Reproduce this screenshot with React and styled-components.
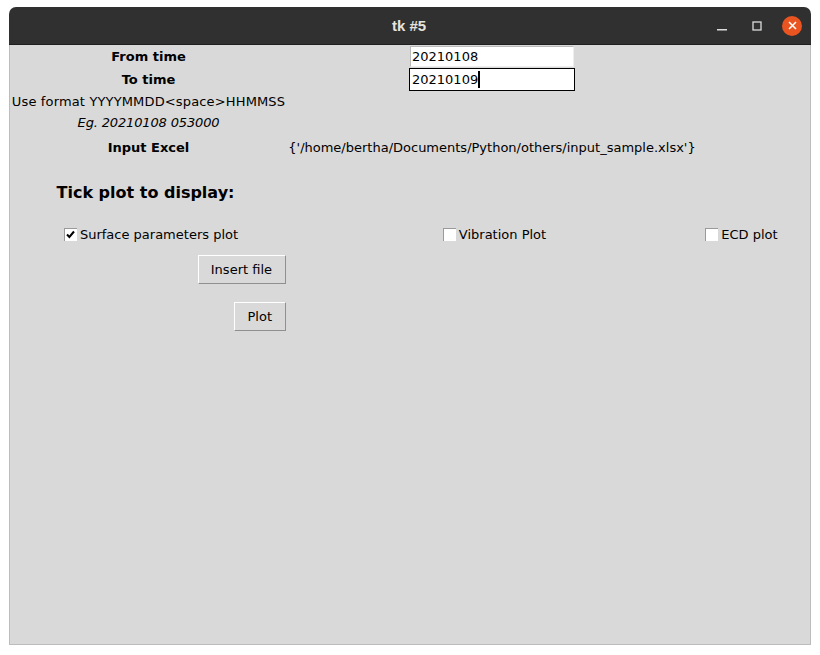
import React from "react";
import styled, { createGlobalStyle } from "styled-components";

const GlobalStyle = createGlobalStyle`
  html, body {
    margin: 0;
    padding: 0;
    background: #ffffff;
  }
`;

const Page = styled.div`
  width: 820px;
  height: 655px;
  padding: 7px 0 0 9px;
  box-sizing: border-box;
`;

const Window = styled.div`
  width: 802px;
  height: 638px;
  display: flex;
  flex-direction: column;
  border-radius: 7px 7px 0 0;
  overflow: hidden;
`;

const TitleBar = styled.div`
  height: 38px;
  flex-shrink: 0;
  background: #303030;
  border-bottom: 1px solid #1f1f1f;
  box-sizing: border-box;
  display: grid;
  grid-template-columns: 1fr auto 1fr;
  align-items: center;
`;

const Title = styled.div`
  grid-column: 2;
  color: #e6e3de;
  font-family: "Liberation Sans", "DejaVu Sans", sans-serif;
  font-weight: bold;
  font-size: 15px;
  padding-right: 2px;
`;

const Controls = styled.div`
  grid-column: 3;
  justify-self: end;
  display: flex;
  align-items: center;
  gap: 20px;
  padding-right: 9px;
`;

const CtrlIcon = styled.svg`
  display: block;
  margin-right: ${({ $extra }) => $extra || 0}px;
`;

const CloseBtn = styled.div`
  width: 20px;
  height: 20px;
  border-radius: 50%;
  background: #e95420;
  display: flex;
  align-items: center;
  justify-content: center;
`;

const Content = styled.div`
  flex: 1;
  background: #d9d9d9;
  border: 1px solid #bcbcbc;
  border-top: none;
  display: grid;
  grid-template-columns: 277px 410px 84px;
  grid-template-rows: 23px 23px 21px 20px 30px 60px 24px 47px 47px;
  align-content: start;
  align-items: center;
  color: #000;
  font-family: "DejaVu Sans", "Liberation Sans", sans-serif;
  font-size: 13px;
`;

const Cell = styled.div`
  grid-column: ${({ $col }) => $col};
  grid-row: ${({ $row }) => $row};
  justify-self: ${({ $justify }) => $justify || "center"};
  white-space: nowrap;
`;

const FieldLabel = styled(Cell)`
  font-weight: bold;
`;

const Hint = styled(Cell)`
  font-style: ${({ $italic }) => ($italic ? "italic" : "normal")};
  letter-spacing: ${({ $spacing }) => $spacing || 0}px;
`;

const Heading = styled(Cell)`
  font-weight: bold;
  font-size: 16px;
  padding-right: 6px;
`;

const Entry = styled(Cell)`
  width: ${({ $focus }) => ($focus ? "166px" : "164px")};
  height: ${({ $focus }) => ($focus ? "23px" : "21px")};
  box-sizing: border-box;
  background: #ffffff;
  border: 1px solid ${({ $focus }) => ($focus ? "#000000" : "#b9b9b9")};
  border-right-color: ${({ $focus }) => ($focus ? "#000000" : "#eeeeee")};
  border-bottom-color: ${({ $focus }) => ($focus ? "#000000" : "#eeeeee")};
  padding: 0 0 0 ${({ $focus }) => ($focus ? "2px" : "1px")};
  display: flex;
  align-items: center;
  line-height: 1;
`;

const Caret = styled.span`
  display: inline-block;
  width: 2px;
  height: 17px;
  background: #000;
`;

const Check = styled(Cell)`
  display: flex;
  align-items: center;
  gap: 3px;
  padding-left: 5px;
`;

const Box = styled.span`
  width: 13px;
  height: 13px;
  box-sizing: border-box;
  background: #ffffff;
  border-top: 1px solid #9a9a9a;
  border-left: 1px solid #9a9a9a;
  display: flex;
  align-items: center;
  justify-content: center;
`;

const Button = styled(Cell)`
  height: 29px;
  box-sizing: border-box;
  padding: 0 13px 0 12px;
  display: flex;
  align-items: center;
  background: #d9d9d9;
  border: 1px solid #ffffff;
  border-right-color: #8f8f8f;
  border-bottom-color: #8f8f8f;
  margin-right: 1px;
  color: #000;
  font-family: inherit;
  font-size: 13px;
`;

const CheckItem = ({ col, checked, children }) => (
  <Check $col={col} $row={7}>
    <Box>
      {checked && (
        <svg width="9" height="9" viewBox="0 0 9 9">
          <path d="M1 4.5 L3.4 7 L8 1.5" stroke="#000" strokeWidth="2" fill="none" />
        </svg>
      )}
    </Box>
    <span>{children}</span>
  </Check>
);

const App = () => {
  return (
    <Page>
      <GlobalStyle />
      <Window>
        <TitleBar>
          <Title>tk #5</Title>
          <Controls>
            <CtrlIcon $extra={5} width="10" height="10" viewBox="0 0 10 10">
              <rect x="0" y="8" width="10" height="1.5" fill="#dcdcdc" />
            </CtrlIcon>
            <CtrlIcon width="10" height="10" viewBox="0 0 10 10">
              <rect x="1" y="1" width="8" height="8" stroke="#dcdcdc" strokeWidth="1.3" fill="none" />
            </CtrlIcon>
            <CloseBtn>
              <svg width="9" height="9" viewBox="0 0 9 9">
                <path d="M1 1 L8 8 M8 1 L1 8" stroke="#fff" strokeWidth="1.5" />
              </svg>
            </CloseBtn>
          </Controls>
        </TitleBar>
        <Content>
          <FieldLabel $col={1} $row={1}>From time</FieldLabel>
          <Entry $col={2} $row={1}>20210108</Entry>
          <FieldLabel $col={1} $row={2}>To time</FieldLabel>
          <Entry $col={2} $row={2} $focus>
            20210109
            <Caret />
          </Entry>
          <Hint $col={1} $row={3} $spacing={0.15}>
            Use format YYYYMMDD&lt;space&gt;HHMMSS
          </Hint>
          <Hint $col={1} $row={4} $italic $spacing={-0.15}>
            Eg. 20210108 053000
          </Hint>
          <FieldLabel $col={1} $row={5}>Input Excel</FieldLabel>
          <Hint $col={2} $row={5}>
            {"{'/home/bertha/Documents/Python/others/input_sample.xlsx'}"}
          </Hint>
          <Heading $col={1} $row={6}>Tick plot to display:</Heading>
          <CheckItem col={1} checked>Surface parameters plot</CheckItem>
          <CheckItem col={2}>Vibration Plot</CheckItem>
          <CheckItem col={3}>ECD plot</CheckItem>
          <Button as="button" $col={1} $row={8} $justify="end">Insert file</Button>
          <Button as="button" $col={1} $row={9} $justify="end">Plot</Button>
        </Content>
      </Window>
    </Page>
  );
};

export default App;
